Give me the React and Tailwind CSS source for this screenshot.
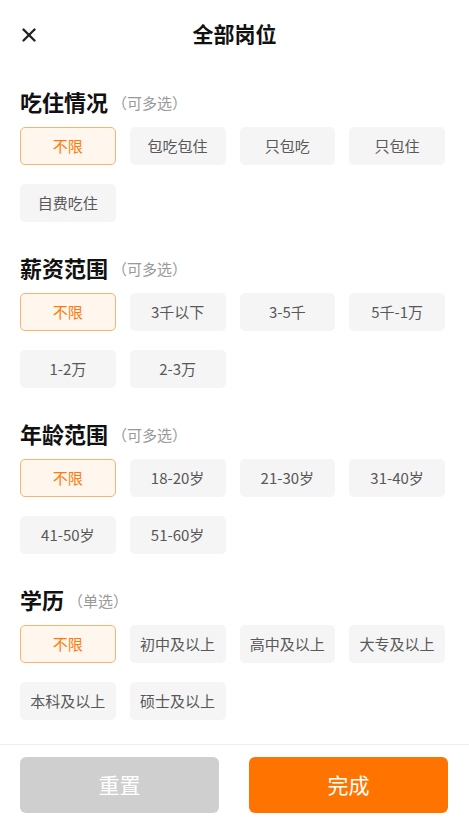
import { X } from "lucide-react";

const sections = [
  { title: "吃住情况", hint: "（可多选）", options: ["不限", "包吃包住", "只包吃", "只包住", "自费吃住"] },
  { title: "薪资范围", hint: "（可多选）", options: ["不限", "3千以下", "3-5千", "5千-1万", "1-2万", "2-3万"] },
  { title: "年龄范围", hint: "（可多选）", options: ["不限", "18-20岁", "21-30岁", "31-40岁", "41-50岁", "51-60岁"] },
  { title: "学历", hint: "（单选）", options: ["不限", "初中及以上", "高中及以上", "大专及以上", "本科及以上", "硕士及以上"] },
];

function Chip({ label, active }) {
  return (
    <div
      className={
        active
          ? "flex h-[38px] items-center justify-center rounded-[5px] border border-[#fbb36f] bg-[#fff6ee] text-[15px] text-[#ff7a0a]"
          : "flex h-[38px] items-center justify-center rounded-[5px] bg-[#f5f5f5] text-[15px] text-[#585858]"
      }
    >
      {label}
    </div>
  );
}

export default function App() {
  return (
    <div
      className="flex h-[821px] flex-col bg-white"
      style={{ fontFamily: '"Noto Sans CJK SC", "Noto Sans", sans-serif' }}
    >
      {/* 顶部 */}
      <div className="relative flex h-[68px] items-center justify-center">
        <X className="absolute left-[18px] top-[24px] h-[22px] w-[22px] text-[#222]" strokeWidth={2.6} />
        <h1 className="text-[21px] font-bold text-[#111]">全部岗位</h1>
      </div>

      <div className="flex-1 pl-5 pr-6">
        {sections.map((s, i) => (
          <div key={s.title} className={i === 0 ? "pt-[19px]" : "pt-[31px]"}>
            <div className="flex h-[28px] items-center">
              <span className="text-[22px] font-bold leading-none text-[#111]">{s.title}</span>
              <span className="ml-1 mt-1 text-[15px] text-[#999]">{s.hint}</span>
            </div>
            <div className="mt-[12px] grid grid-cols-4 gap-x-[14px] gap-y-[19px]">
              {s.options.map((o, j) => (
                <Chip key={o} label={o} active={j === 0} />
              ))}
            </div>
          </div>
        ))}
      </div>

      {/* 底部按钮 */}
      <div className="flex gap-[30px] border-t border-[#eeeeee] pb-2 pl-5 pr-[21px] pt-[12px]">
        <button className="h-[56px] flex-1 rounded-[6px] bg-[#cfcfcf] text-[21px] text-white">重置</button>
        <button className="h-[56px] flex-1 rounded-[6px] bg-[#ff7400] text-[21px] text-white">完成</button>
      </div>
    </div>
  );
}
